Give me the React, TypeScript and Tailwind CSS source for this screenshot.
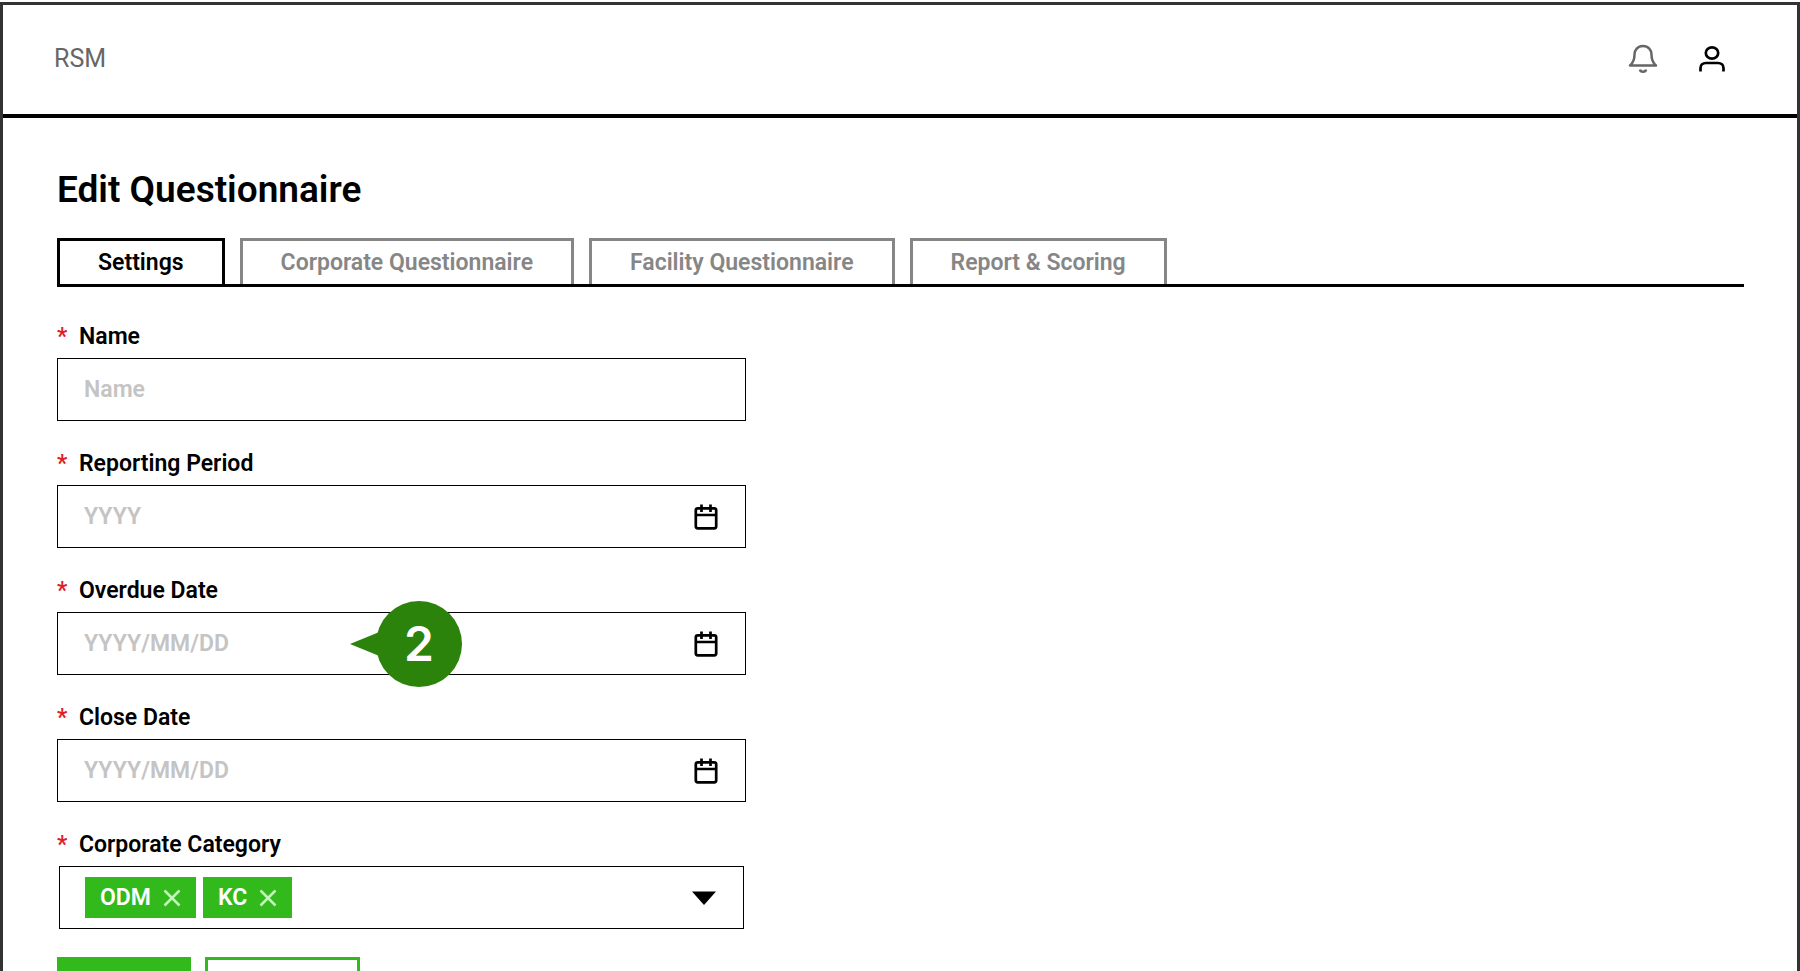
import { useState } from 'react';

type Field = {
  id: string;
  label: string;
  placeholder: string;
  calendar?: boolean;
  marker?: string;
};

const tabs = [
  'Settings',
  'Corporate Questionnaire',
  'Facility Questionnaire',
  'Report & Scoring',
];

const fields: Field[] = [
  { id: 'name', label: 'Name', placeholder: 'Name' },
  { id: 'period', label: 'Reporting Period', placeholder: 'YYYY', calendar: true },
  {
    id: 'overdue',
    label: 'Overdue Date',
    placeholder: 'YYYY/MM/DD',
    calendar: true,
    marker: '2',
  },
  { id: 'close', label: 'Close Date', placeholder: 'YYYY/MM/DD', calendar: true },
];

export default function App() {
  const [activeTab, setActiveTab] = useState('Settings');
  const [categories, setCategories] = useState(['ODM', 'KC']);

  return (
    <div className="h-screen overflow-hidden bg-white pt-0.5 font-['Roboto',sans-serif] text-black">
      <div className="min-h-full border-x-[3px] border-t-[3px] border-[#333333]">
        <header className="flex h-[113px] items-center justify-between border-b-4 border-black pr-[70px] pb-0.5 pl-[51px]">
          <span className="text-[25px] leading-8 text-[#666666]">RSM</span>
          <div className="flex items-center gap-[39px]">
            <button type="button" aria-label="Notifications">
              <BellIcon />
            </button>
            <button type="button" aria-label="Account">
              <UserIcon />
            </button>
          </div>
        </header>

        <main className="pt-[50px] pr-[53px] pl-[54px]">
          <h1 className="text-[37px] leading-[44px] font-semibold">
            Edit Questionnaire
          </h1>

          <div
            role="tablist"
            className="mt-[26px] flex gap-[15px] border-b-[3px] border-black"
          >
            {tabs.map((tab) => (
              <button
                key={tab}
                type="button"
                role="tab"
                aria-selected={tab === activeTab}
                onClick={() => setActiveTab(tab)}
                className={`h-[46px] border-x-[3px] border-t-[3px] px-[38px] text-[23px] leading-7 font-semibold ${
                  tab === activeTab
                    ? 'border-black text-black'
                    : 'border-[#868686] text-[#868686]'
                }`}
              >
                {tab}
              </button>
            ))}
          </div>

          <form className="mt-9 max-w-[689px]">
            {fields.map((field) => (
              <TextField key={field.id} field={field} />
            ))}

            <FieldLabel htmlFor="category">Corporate Category</FieldLabel>
            <div className="mx-0.5 mt-[7px] flex h-[63px] items-center border border-black pr-[27px] pl-[25px]">
              <div className="flex gap-[7px]">
                {categories.map((category) => (
                  <span
                    key={category}
                    className="flex h-[41px] items-center gap-3 bg-[#32ba1c] px-[15px] text-[23px] leading-7 font-semibold text-white"
                  >
                    {category}
                    <button
                      type="button"
                      aria-label={`Remove ${category}`}
                      onClick={() =>
                        setCategories(categories.filter((c) => c !== category))
                      }
                    >
                      <CrossIcon />
                    </button>
                  </span>
                ))}
              </div>
              <button
                id="category"
                type="button"
                aria-haspopup="listbox"
                className="ml-auto"
              >
                <svg width="24" height="14" viewBox="0 0 24 14" aria-hidden="true">
                  <path d="M0 0.5h24L12 14z" />
                </svg>
              </button>
            </div>

            <div className="mt-7 flex gap-[14px]">
              <button
                type="submit"
                aria-label="Save"
                className="h-14 w-[134px] bg-[#32ba1c]"
              />
              <button
                type="button"
                aria-label="Cancel"
                className="h-14 w-[155px] border-[3px] border-[#32ba1c]"
              />
            </div>
          </form>
        </main>
      </div>
    </div>
  );
}

function FieldLabel({
  htmlFor,
  children,
}: {
  htmlFor: string;
  children: string;
}) {
  return (
    <label
      htmlFor={htmlFor}
      className="flex gap-3 text-[23px] leading-7 font-semibold"
    >
      <span className="w-[10px] text-[#e02020]">*</span>
      {children}
    </label>
  );
}

function TextField({ field }: { field: Field }) {
  return (
    <div className="mb-[29px]">
      <FieldLabel htmlFor={field.id}>{field.label}</FieldLabel>
      <div className="relative mt-[7px] flex h-[63px] items-center border border-black pr-[27px]">
        <input
          id={field.id}
          type="text"
          placeholder={field.placeholder}
          className="h-full min-w-0 flex-1 pl-[26px] text-[23px] font-semibold outline-none placeholder:text-[#c4c4c4]"
        />
        {field.calendar ? (
          <button type="button" aria-label={`Pick ${field.label}`}>
            <CalendarIcon />
          </button>
        ) : null}
        {field.marker ? <Marker text={field.marker} /> : null}
      </div>
    </div>
  );
}

function Marker({ text }: { text: string }) {
  return (
    <div className="absolute top-1/2 left-[292px] flex -translate-y-1/2 items-center">
      <svg
        className="-mr-[18px]"
        width="44"
        height="36"
        viewBox="0 0 44 36"
        fill="#2c830c"
        aria-hidden="true"
      >
        <path d="M0 18 44 0v36z" />
      </svg>
      <span className="flex size-[86px] items-center justify-center rounded-full bg-[#2c830c] font-['Inter',sans-serif] text-5xl font-semibold text-white">
        {text}
      </span>
    </div>
  );
}

function BellIcon() {
  return (
    <svg
      width="30"
      height="30"
      viewBox="0 0 30 30"
      fill="none"
      stroke="#666666"
      strokeWidth="2.5"
      strokeLinejoin="round"
      aria-hidden="true"
    >
      <path d="M15 2C9.500 2 6.500 6 6.500 10.500C6.500 16 5 19 2 21.500H28C25 19 23.500 16 23.500 10.500C23.500 6 20.500 2 15 2Z" />
      <path d="M12 25.500C12.500 28.500 17.500 28.500 18 25.500" />
    </svg>
  );
}

function UserIcon() {
  return (
    <svg
      width="30"
      height="30"
      viewBox="0 0 30 30"
      fill="none"
      stroke="#000000"
      strokeWidth="2.7"
      aria-hidden="true"
    >
      <ellipse cx="15" cy="9" rx="6.200" ry="5.600" />
      <path d="M3.500 27.500V24C3.500 21 6 19 9 19H21C24 19 26.500 21 26.500 24V27.500" />
    </svg>
  );
}

function CalendarIcon() {
  return (
    <svg
      width="24"
      height="28"
      viewBox="0 0 24 28"
      fill="none"
      stroke="#000000"
      strokeWidth="2.7"
      aria-hidden="true"
    >
      <rect x="1.800" y="5.300" width="20.400" height="20" rx="2" />
      <path d="M2 12H22M7.500 1.500V9M16.500 1.500V9" />
    </svg>
  );
}

function CrossIcon() {
  return (
    <svg
      className="block"
      width="18"
      height="18"
      viewBox="0 0 18 18"
      fill="none"
      stroke="#c4f5bc"
      strokeWidth="2.5"
      aria-hidden="true"
    >
      <path d="M1.500 1.500 16.500 16.500M16.500 1.500 1.500 16.500" />
    </svg>
  );
}
